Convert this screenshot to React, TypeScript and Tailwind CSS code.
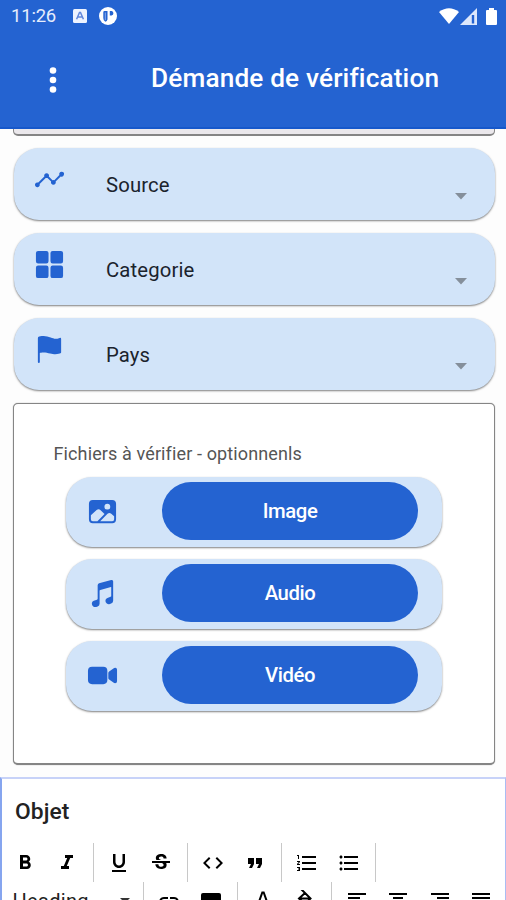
import type { ReactNode } from "react";
import { IoAnalytics, IoFlag, IoGrid, IoImage, IoMusicalNotes, IoVideocam } from "react-icons/io5";
import {
  MdCode,
  MdFormatAlignCenter,
  MdFormatAlignJustify,
  MdFormatAlignLeft,
  MdFormatAlignRight,
  MdFormatBold,
  MdFormatItalic,
  MdFormatListBulleted,
  MdFormatListNumbered,
  MdFormatQuote,
  MdFormatUnderlined,
  MdInsertLink,
  MdStrikethroughS,
} from "react-icons/md";

function StatusBar() {
  return (
    <div className="flex h-8 items-center pl-[11px] pr-[9px] text-white">
      <span className="w-[62px] whitespace-nowrap text-[18.5px] leading-8 tracking-[-0.2px] text-[#e6edfc]">11:26</span>
      <svg width="14" height="14" viewBox="0 0 14 14">
        <rect width="14" height="14" rx="1.5" fill="#eef3ff" />
        <path d="M3.6 10.2 6.5 3.4h1l2.9 6.8M4.8 8h4.4" fill="none" stroke="#6288dc" strokeWidth="1.5" />
      </svg>
      <svg className="ml-[12px]" width="18" height="18" viewBox="0 0 18 18">
        <circle cx="9" cy="9" r="9" fill="#fff" />
        <path d="M4.3 5.2q0-1.2 1.2-1.2h3v8.5q-.4 2-2.2 2.2Q4.300 14 4.300 11zM10.800 4h1.800q1.800.3 1.800 2.200t-1.800 2.200h-1.800z" fill="#2463d1" />
        <path d="M6.300 5.500v7.600" stroke="#89a9e8" strokeWidth="1" />
      </svg>
      <div className="ml-auto flex items-center">
        <svg width="20" height="16" viewBox="0 0 20 16">
          <path d="M0 4Q10-3.500 20 4L10 16z" fill="#fff" />
        </svg>
        <svg className="ml-px" width="17" height="17" viewBox="0 0 17 17">
          <path d="M17 0v17H0z" fill="#dce7fc" />
          <path d="M11.800 7h2.400v8.500h-2.400z" fill="#2463d1" />
        </svg>
        <svg className="ml-[9px]" width="11" height="17" viewBox="0 0 11 17">
          <path d="M3 0h5v2h2q1 0 1 1v13q0 1-1 1H1q-1 0-1-1V3q0-1 1-1h2z" fill="#fff" />
        </svg>
      </div>
    </div>
  );
}

function SelectCard({ icon, label }: { icon: ReactNode; label: string }) {
  return (
    <div className="flex h-[72px] rounded-[25px] bg-[#d2e4f9] pl-[20px] pr-[28px] text-[#2463d1] shadow-[0_1px_2px_rgba(0,0,0,0.5)]">
      <div className="w-[72px] pt-[15.500px]">{icon}</div>
      <span className="pt-[23px] text-[20.300px] leading-7 tracking-[0.150px] text-[#1b232d]">{label}</span>
      <svg className="ml-auto mt-[44.500px]" width="12" height="7" viewBox="0 0 12 7">
        <path d="M0 0h12L6 6.500z" fill="#858f9b" />
      </svg>
    </div>
  );
}

function FileCard({ icon, label }: { icon: ReactNode; label: string }) {
  return (
    <div className="flex h-[69.500px] rounded-[26px] bg-[#d2e4f9] pl-[21px] pr-[24px] pt-[5px] text-[#2463d1] shadow-[0_1px_2px_rgba(0,0,0,0.5)]">
      <div className="flex h-[58px] w-[75px] items-center pt-px">{icon}</div>
      <button className="h-[58px] w-[256px] shrink-0 rounded-full bg-[#2463d1] text-[20.300px] font-medium tracking-[-0.400px] text-white">{label}</button>
    </div>
  );
}

function Group({ children }: { children: ReactNode }) {
  return <div className="flex w-[94px] items-center justify-center border-r border-[#c8c8c8]">{children}</div>;
}

function Tool({ children }: { children: ReactNode }) {
  return <button className="flex h-[39px] w-[41.300px] shrink-0 items-center justify-center">{children}</button>;
}

function Editor() {
  return (
    <div className="mt-[12px] h-[124px] overflow-hidden border-l-2 border-r border-t-2 border-l-[#86a5ef] border-r-[#a9bdf3] border-t-[#c7d2f8] bg-white text-black">
      <div className="pl-[13px] pt-[17px] text-[22.800px] font-medium leading-[32px] tracking-[0.100px] text-[#222]">Objet</div>
      <div className="-ml-[2.500px] mt-[15px] flex h-[39px]">
        <Group>
          <Tool><MdFormatBold size={24} /></Tool>
          <Tool><MdFormatItalic size={24} /></Tool>
        </Group>
        <Group>
          <Tool><MdFormatUnderlined size={24} /></Tool>
          <Tool><MdStrikethroughS size={24} /></Tool>
        </Group>
        <Group>
          <Tool><MdCode size={24} /></Tool>
          <Tool><MdFormatQuote size={24} /></Tool>
        </Group>
        <Group>
          <Tool><MdFormatListNumbered size={24} /></Tool>
          <Tool><MdFormatListBulleted size={24} /></Tool>
        </Group>
      </div>
      <div className="-ml-[2.500px] flex h-[39px]">
        <div className="flex w-[144px] items-center border-r border-[#c8c8c8] pl-[13px] pr-[13px]">
          <span className="text-[20px] leading-[39px] tracking-[0.3px] text-[#222]">Heading</span>
          <svg className="mb-[3px] ml-auto" width="10" height="5" viewBox="0 0 10 5">
            <path d="M0 0h10L5 5z" fill="#333" />
          </svg>
        </div>
        <Group>
          <Tool><MdInsertLink size={24} /></Tool>
          <Tool><span className="h-[18px] w-[20px] rounded-[2px] bg-black" /></Tool>
        </Group>
        <Group>
          <Tool>
            <svg width="24" height="24" viewBox="0 0 24 24">
              <path d="M6.500 16 11.300 2.500h1.400L17.500 16M8.500 12h7" fill="none" stroke="#000" strokeWidth="2" />
            </svg>
          </Tool>
          <Tool>
            <svg width="24" height="24" viewBox="0 0 24 24">
              <path d="m8 -1 9.500 9.500L12 14l-6-5.500L12 3M6 8.500h11" fill="none" stroke="#000" strokeWidth="2" />
            </svg>
          </Tool>
        </Group>
        <div className="flex pl-[5px]">
          <Tool><MdFormatAlignLeft size={24} /></Tool>
          <Tool><MdFormatAlignCenter size={24} /></Tool>
          <Tool><MdFormatAlignRight size={24} /></Tool>
          <Tool><MdFormatAlignJustify size={24} /></Tool>
        </div>
      </div>
    </div>
  );
}

export default function App() {
  return (
    <div className="h-[900px] w-[506px] overflow-hidden bg-[#fdfdfd] font-[Roboto,sans-serif]">
      <header className="h-[129px] border-b-2 border-[#1658cb] bg-[#2463d1]">
        <StatusBar />
        <div className="flex h-[94px] items-center pl-[49px] text-white">
          <svg className="mt-[2px]" width="8" height="28" viewBox="0 0 8 28">
            <circle cx="4" cy="4.500" r="3.300" fill="#fff" />
            <circle cx="4" cy="14" r="3.300" fill="#fff" />
            <circle cx="4" cy="23.500" r="3.300" fill="#fff" />
          </svg>
          <h1 className="-mt-[2px] ml-[94px] whitespace-nowrap text-[26.200px] font-medium leading-8 tracking-[0.160px]">Démande de vérification</h1>
        </div>
      </header>
      <div className="ml-[13px] mr-[11px] h-[7px] rounded-b-[5px] border-x border-b-2 border-[#858585] bg-[#ebe8ec]" />
      <main>
        <div className="ml-[14px] mr-[11px] mt-[12px] flex flex-col gap-[13px]">
          <SelectCard icon={<IoAnalytics size={31} />} label="Source" />
          <SelectCard icon={<IoGrid size={31} />} label="Categorie" />
          <SelectCard icon={<IoFlag size={31} />} label="Pays" />
        </div>
        <section className="ml-[13px] mr-[11px] mt-[13px] h-[362px] rounded-[5px] border-[1.500px] border-b-2 border-[#858585] bg-white pl-[52px] pr-[52px] pt-[38px] shadow-[0_0_1px_rgba(0,0,0,0.5)]">
          <p className="-ml-[12.500px] whitespace-nowrap text-[18px] leading-6 tracking-[0.120px] text-[#555]">Fichiers à vérifier - optionnenls</p>
          <div className="mt-[11px] flex flex-col gap-[12.500px]">
            <FileCard icon={<IoImage size={31} />} label="Image" />
            <FileCard icon={<IoMusicalNotes size={31} />} label="Audio" />
            <FileCard icon={<IoVideocam size={31} />} label="Vidéo" />
          </div>
        </section>
        <Editor />
      </main>
    </div>
  );
}
